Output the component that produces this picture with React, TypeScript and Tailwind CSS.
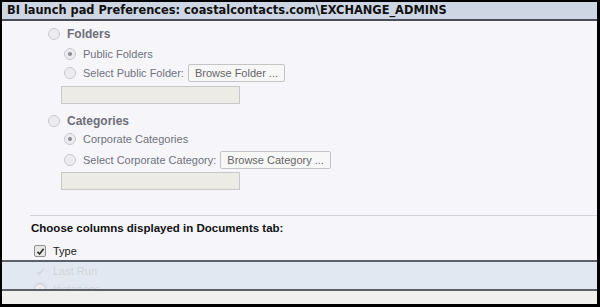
const sans = "font-['Liberation_Sans',Arial,sans-serif]";

function Radio({ checked = false }: { checked?: boolean }) {
  return (
    <span className="w-[12px] h-[12px] rounded-full border border-[#c9c9cf] bg-[#ececf0] flex items-center justify-center shrink-0">
      {checked && <span className="w-[4px] h-[4px] rounded-full bg-[#8a8a92]" />}
    </span>
  );
}

function Check({ faded = false }: { faded?: boolean }) {
  return (
    <span
      className={
        faded
          ? 'w-[12px] h-[12px] flex items-center justify-center shrink-0'
          : 'w-[12px] h-[12px] rounded-[2px] border border-[#8f8f8f] bg-[#e8e8e8] flex items-center justify-center shrink-0'
      }
    >
      <svg width="9" height="9" viewBox="0 0 9 9">
        <path
          d="M1.5 4.8 L3.6 7 L7.6 1.8"
          fill="none"
          stroke={faded ? '#d4d8de' : '#333'}
          strokeWidth="1.7"
        />
      </svg>
    </span>
  );
}

function Button({ label }: { label: string }) {
  return (
    <span className="h-[18px] -ml-[3px] px-[6px] flex items-center border border-[#c4c4c4] rounded-[2px] bg-[#f7f7f7] text-[#666] text-[11px]">
      {label}
    </span>
  );
}

export default function App() {
  return (
    <div className={`w-[600px] h-[307px] border-l-2 border-t-2 border-r-[3px] border-b-[3px] border-black bg-[#f5f5fa] flex flex-col overflow-hidden ${sans}`}>
      <div className="h-[19px] bg-[#cdd6e2] border-b-2 border-[#4a4f57] px-[5px] flex items-center text-[#111] font-bold text-[11.4px] font-['DejaVu_Sans',Verdana,sans-serif] shrink-0">
        BI launch pad Preferences: coastalcontacts.com\EXCHANGE_ADMINS
      </div>

      <div className="flex flex-col text-[11px] text-[#72727c]">
        <div className="h-[20px] mt-[3px] pl-[46px] flex items-center gap-[7px]">
          <Radio />
          <span className="font-bold text-[12px] text-[#6e6e78]">Folders</span>
        </div>
        <div className="h-[18px] mt-[1px] pl-[62px] flex items-center gap-[7px]">
          <Radio checked />
          <span>Public Folders</span>
        </div>
        <div className="h-[20px] pl-[62px] flex items-center gap-[7px]">
          <Radio />
          <span>Select Public Folder:</span>
          <Button label="Browse Folder ..." />
        </div>
        <div className="mt-[3px] ml-[59px] w-[179px] h-[18px] border border-[#c8c8c8] bg-[#edebe6]" />

        <div className="h-[19px] mt-[7px] pl-[46px] flex items-center gap-[7px]">
          <Radio />
          <span className="font-bold text-[12px] text-[#6e6e78]">Categories</span>
        </div>
        <div className="h-[18px] pl-[62px] flex items-center gap-[7px]">
          <Radio checked />
          <span>Corporate Categories</span>
        </div>
        <div className="h-[20px] mt-[2px] pl-[62px] flex items-center gap-[7px]">
          <Radio />
          <span>Select Corporate Category:</span>
          <Button label="Browse Category ..." />
        </div>
        <div className="mt-[2px] ml-[59px] w-[179px] h-[18px] border border-[#c8c8c8] bg-[#edebe6]" />

        <div className="mt-[25px] ml-[28px] h-0 border-t border-[#d2d2da]" />
        <div className="h-[18px] mt-[4px] pl-[29px] flex items-center font-bold text-[11.5px] text-[#111]">
          Choose columns displayed in Documents tab:
        </div>
        <div className="h-[16px] mt-[5px] pl-[32px] flex items-center gap-[7px] text-[#222]">
          <Check />
          <span>Type</span>
        </div>
      </div>

      <div className="mt-auto flex flex-col shrink-0">
        <div className="h-[31px] border-t-2 border-b-2 border-[#5d6066] bg-[#e2e8f1] overflow-hidden flex flex-col text-[11px] text-[#d0d5dc]">
          <div className="h-[18px] mt-[1px] pl-[32px] flex items-center gap-[7px]">
            <Check faded />
            <span>Last Run</span>
          </div>
          <div className="h-[18px] mt-[1px] pl-[32px] flex items-center gap-[7px]">
            <Radio />
            <span>Instances</span>
          </div>
        </div>
        <div className="h-[13px] bg-[#f0f0ee]" />
      </div>
    </div>
  );
}
